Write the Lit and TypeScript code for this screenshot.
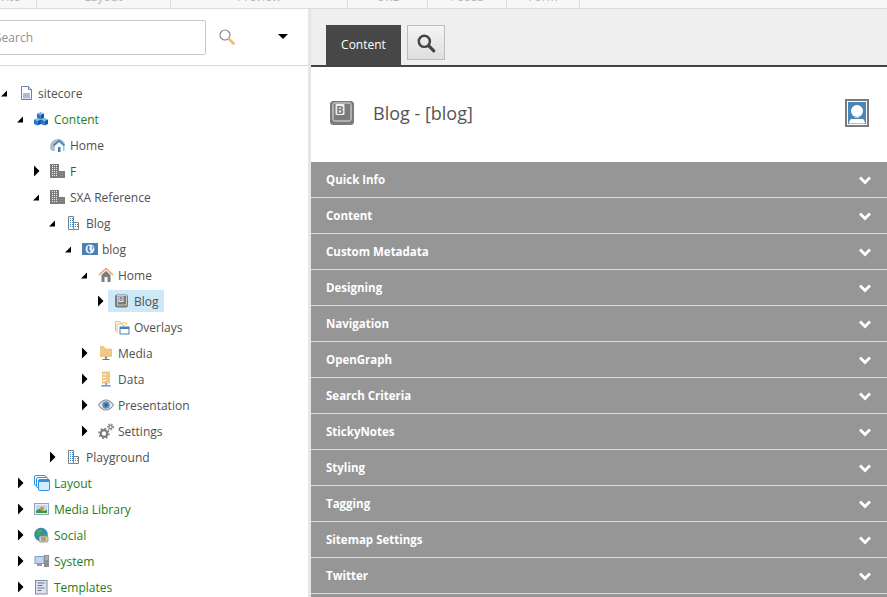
import { LitElement, html, css, svg } from "lit";
import { customElement } from "lit/decorators.js";

const cube = (x: number, y: number) => svg`
  <path d="M${x} ${y + 1.500}l3.500 -1.500 3.500 1.500 -3.500 1.500z" fill="#7dbcf2"/>
  <path d="M${x} ${y + 1.500}l3.500 1.500v4.500l-3.500 -1.500z" fill="#1f78d0"/>
  <path d="M${x + 7} ${y + 1.500}l-3.500 1.500v4.500l3.500 -1.500z" fill="#0f56a6"/>`;

const windows = (cells: number[][], fill: string) =>
  cells.map(([x, y]) => svg`<rect x="${x}" y="${y}" width="1" height="1" fill="${fill}"/>`);

const grid: number[][] = [];
for (const y of [2, 4, 6, 8, 10, 12]) for (const x of [2, 4, 6]) grid.push([x, y]);

const icons: Record<string, unknown> = {
  doc: svg`<path d="M3.500 1.500h7l3 3v10h-10z" fill="#fff" stroke="#6d81a6"/><path d="M10.500 1.500v3h3" fill="#dfe6f2" stroke="#6d81a6"/><rect x="5" y="8" width="7" height="5.500" fill="#a9bbdb"/>`,
  cubes: svg`${cube(3, 1)}${cube(0, 7)}${cube(7, 7)}`,
  homeBlue: svg`<path d="M0 10C0 5 4 2 8 2c3 0 5 1.500 6.500 3.500V14H3c-2 0-3-1.500-3-4z" fill="#b4bdc8"/><path d="M3.500 8.500L9 3.500l5.500 5" fill="none" stroke="#2a86d0" stroke-width="1.600"/><path d="M5 9l4-3.500L13 9v6H5z" fill="#fff"/><rect x="8" y="10" width="2.500" height="5" fill="#2a86d0"/>`,
  buildings: svg`<rect x="0" y="1" width="9" height="14" fill="#7d7d7d"/><rect x="9" y="8" width="6" height="7" fill="#7d7d7d"/>${windows(grid, "#eee")}${windows([[10, 10], [12, 10], [10, 12], [12, 12]], "#6aa5d8")}`,
  building: svg`<path d="M2.500 1.500h5v13h-5z" fill="#fff" stroke="#808080"/><path d="M7.500 7.500h5v7h-5z" fill="#fff" stroke="#808080"/>${windows([[4, 3], [6, 3], [4, 5], [6, 5], [4, 7], [6, 7], [4, 9], [6, 9], [4, 11], [6, 11], [9, 9], [11, 9], [9, 11], [11, 11]], "#3d86c6")}`,
  site: svg`<rect x="0" y="2" width="16" height="12" fill="#4a80b3"/><circle cx="8" cy="8" r="4.500" fill="#e8eff6"/><path d="M6 4.500l2 1.500-1 2 1.500 2-1 2-2-3zM10 5l1.500 1.500L10.500 9z" fill="#4a80b3"/>`,
  home: svg`<path d="M1 8l7-6.500L15 8" fill="none" stroke="#ee9f6d" stroke-width="1.500"/><path d="M3.500 8L8 3.800 12.500 8v7h-9z" fill="#7d7d7d"/><rect x="6.500" y="10" width="3" height="5" fill="#fff"/>`,
  key: svg`<rect x="1" y="1.500" width="13" height="13" rx="2" fill="#7b7b7b"/><rect x="3.500" y="2.500" width="9" height="9.500" fill="none" stroke="#ddd" stroke-width=".8"/><rect x="4.500" y="3.500" width="5" height="5.500" fill="#eee"/><text x="7" y="8.400" text-anchor="middle" font-family="Open Sans" font-weight="700" font-size="6" fill="#7b7b7b">B</text>`,
  overlays: svg`<path d="M1.500 12V2.500h4l1 1.500h6v2" fill="#fff" stroke="#eebc77"/><path d="M3 14V5h5l1 1.500h2" fill="#fff" stroke="#eebc77"/><rect x="6" y="8" width="9" height="7" fill="#fff" stroke="#4a80b3"/><rect x="6" y="8" width="9" height="2" fill="#4a80b3"/>`,
  media: svg`<path d="M2.500 1.500v10h11V4h-6.500L6 1.500z" fill="#f2c983" stroke="#eebc77" stroke-width=".8"/><path d="M8 11.500v2.500M4.500 14.500h7" stroke="#4a80b3" stroke-width="1.200"/><path d="M6.500 12.500h3L8 14z" fill="#4a80b3"/>`,
  data: svg`<rect x="4" y="0.500" width="8" height="12" fill="#f2c983"/><path d="M5 3.500h3M5 6.500h3M5 9.500h3" stroke="#fff" stroke-width="1.200"/><path d="M8 12v2M3.500 14.800h9" stroke="#4a80b3" stroke-width="1.200"/>`,
  eye: svg`<path d="M.5 8C3 4.500 5.500 3 8 3s5 1.500 7.500 5c-2.500 3.500-5 5-7.500 5S3 11.500.5 8z" fill="#e9edf2" stroke="#8d8d8d" stroke-width="1.100"/><circle cx="8" cy="8" r="3.800" fill="#5a8fc0"/><circle cx="8" cy="8" r="1.700" fill="#2e628f"/>`,
  gears: svg`<circle cx="6" cy="10.500" r="3.300" fill="none" stroke="#777" stroke-width="2.200"/><circle cx="6" cy="10.500" r="5" fill="none" stroke="#777" stroke-width="1.400" stroke-dasharray="1.800 2.100"/><circle cx="12.500" cy="4" r="1.700" fill="none" stroke="#888" stroke-width="1.400"/><circle cx="12.500" cy="4" r="3" fill="none" stroke="#888" stroke-width="1.100" stroke-dasharray="1.400 1.500"/>`,
  layout: svg`<rect x="0.500" y="0.500" width="11.500" height="10" rx="1.500" fill="#fff" stroke="#2c93e6"/><rect x="2.500" y="2.500" width="11.500" height="10" rx="1.500" fill="#fff" stroke="#2c93e6"/><rect x="4.500" y="4.500" width="11" height="11" rx="1.500" fill="#d6ecfc" stroke="#2c93e6"/><rect x="4.500" y="4.500" width="11" height="2.500" fill="#2c93e6"/>`,
  picture: svg`<rect x="0.500" y="2.500" width="14" height="11" fill="#e6edf6" stroke="#8fa7c6"/><rect x="2" y="4" width="11" height="8" fill="#bcd7ee"/><path d="M2 12V9.500l4-2 3 2.500 4-1v3z" fill="#3c9a3c"/><circle cx="8" cy="7.500" r="2" fill="#e88a2a"/>`,
  globe: svg`<circle cx="7" cy="7.500" r="6.800" fill="#2e8eb8"/><path d="M3 3.500l4-1.500 1.500 2-3 2.500-1 3-2-2zM10 7l4 1-2 4-2-2z" fill="#53a84a"/><rect x="5" y="9" width="9" height="6" rx="1.500" fill="#d8d2b4" stroke="#8a8468" stroke-width=".8"/><path d="M7 11h5M7 13h5" stroke="#77705a"/>`,
  system: svg`<rect x="0.500" y="3" width="10" height="8" fill="#7f9fc8"/><rect x="1.500" y="4" width="8" height="6" fill="#c4d5ea"/><rect x="3" y="11" width="5" height="2" fill="#8c9bb0"/><rect x="10" y="2" width="5" height="12" fill="#8a8f96"/><path d="M11 4h3M11 6h3" stroke="#c9ced4"/>`,
  template: svg`<rect x="1.500" y="1.500" width="11.500" height="13.500" fill="#dfe3ee" stroke="#7f8aa8"/><path d="M3.500 4h7M3.500 6.500h5M3.500 9h7M3.500 11.500h4" stroke="#6c7690" stroke-width="1.100"/>`,
};

type Node = { t: string; d: number; i: string; a?: "o" | "c"; g?: boolean; s?: boolean };

const tree: Node[] = [
  { t: "sitecore", d: 0, i: "doc", a: "o" },
  { t: "Content", d: 1, i: "cubes", a: "o", g: true },
  { t: "Home", d: 2, i: "homeBlue" },
  { t: "F", d: 2, i: "buildings", a: "c" },
  { t: "SXA Reference", d: 2, i: "buildings", a: "o" },
  { t: "Blog", d: 3, i: "building", a: "o" },
  { t: "blog", d: 4, i: "site", a: "o" },
  { t: "Home", d: 5, i: "home", a: "o" },
  { t: "Blog", d: 6, i: "key", a: "c", s: true },
  { t: "Overlays", d: 6, i: "overlays" },
  { t: "Media", d: 5, i: "media", a: "c" },
  { t: "Data", d: 5, i: "data", a: "c" },
  { t: "Presentation", d: 5, i: "eye", a: "c" },
  { t: "Settings", d: 5, i: "gears", a: "c" },
  { t: "Playground", d: 3, i: "building", a: "c" },
  { t: "Layout", d: 1, i: "layout", a: "c", g: true },
  { t: "Media Library", d: 1, i: "picture", a: "c", g: true },
  { t: "Social", d: 1, i: "globe", a: "c", g: true },
  { t: "System", d: 1, i: "system", a: "c", g: true },
  { t: "Templates", d: 1, i: "template", a: "c", g: true },
];

const topTabs = [
  { t: "Write", w: 63 },
  { t: "Layout", w: 134 },
  { t: "Preview", w: 177 },
  { t: "URL", w: 80 },
  { t: "Feeds", w: 79 },
  { t: "Form", w: 73 },
];

const sections = [
  "Quick Info", "Content", "Custom Metadata", "Designing", "Navigation", "OpenGraph",
  "Search Criteria", "StickyNotes", "Styling", "Tagging", "Sitemap Settings", "Twitter",
];

@customElement("app-root")
export class AppRoot extends LitElement {
  static styles = css`
    :host {
      display: block;
      width: 887px;
      height: 597px;
      overflow: hidden;
      background: #fff;
      font-family: "Open Sans", sans-serif;
      font-size: 12px;
      color: #505050;
    }
    .strip {
      display: flex;
      height: 8px;
      overflow: hidden;
      margin-left: -26px;
      background: #f7f7f7;
      border-bottom: 1px solid #dcdcdc;
    }
    .strip-tab {
      height: 8px;
      box-sizing: border-box;
      border-right: 1px solid #dcdcdc;
      text-align: center;
      font-size: 12px;
      line-height: 18px;
      color: #b5b5b5;
      flex: none;
    }
    .strip-tab span { display: block; margin-top: -12px; }
    .main { display: flex; height: 588px; }
    .left {
      width: 308px;
      flex: none;
      overflow: hidden;
    }
    .split { width: 3px; flex: none; background: #e6e6e6; }
    .search {
      display: flex;
      align-items: center;
      height: 56px;
      border-bottom: 1px solid #d9d9d9;
    }
    .input {
      flex: none;
      box-sizing: border-box;
      width: 236px;
      height: 35px;
      margin-left: -30px;
      padding-left: 24px;
      border: 1px solid #c9c9c9;
      border-radius: 2px;
      font-size: 12px;
      line-height: 33px;
      color: #8f8f8f;
    }
    .glass { flex: none; width: 16px; height: 16px; margin-left: 13px; margin-top: -1px; }
    .caret {
      flex: none;
      margin-left: 43px;
      margin-top: -2px;
      width: 0;
      height: 0;
      border-left: 5.500px solid transparent;
      border-right: 5.500px solid transparent;
      border-top: 5px solid #000;
    }
    .tree { padding-top: 14px; }
    .row {
      display: flex;
      align-items: center;
      height: 26px;
      white-space: nowrap;
    }
    .arrow { flex: none; width: 18px; height: 16px; }
    .item {
      display: flex;
      align-items: center;
      gap: 4px;
      height: 22px;
    }
    .item.sel {
      margin-left: -6px;
      padding: 0 5px 0 6px;
      background: #cde8f6;
    }
    .item svg { flex: none; width: 16px; height: 16px; }
    .green { color: #1c7d1c; }
    .right { flex: 1; display: flex; flex-direction: column; min-width: 0; }
    .tabs {
      flex: none;
      display: flex;
      align-items: flex-start;
      gap: 6px;
      box-sizing: border-box;
      height: 58px;
      padding: 16px 0 0 15px;
      background: #efefef;
      border-bottom: 2px solid #444;
    }
    .tab {
      width: 75px;
      height: 40px;
      background: #474747;
      color: #fff;
      text-align: center;
      line-height: 40px;
      font-size: 12px;
    }
    .sbtn {
      display: flex;
      align-items: center;
      justify-content: center;
      box-sizing: border-box;
      width: 38px;
      height: 35px;
      border: 1px solid #bcbcbc;
      background: linear-gradient(#f4f4f4, #dedede);
    }
    .sbtn svg { width: 20px; height: 20px; }
    .title {
      flex: none;
      display: flex;
      align-items: center;
      box-sizing: border-box;
      height: 95px;
      padding: 0 18px 4px 19px;
    }
    .title-icon { flex: none; width: 24px; height: 24px; }
    .title-text {
      margin-left: 19px;
      flex: 1;
      font-size: 18px;
      color: #555;
    }
    .avatar { flex: none; width: 24px; height: 28px; display: block; }
    .sec {
      flex: none;
      display: flex;
      align-items: center;
      justify-content: space-between;
      box-sizing: border-box;
      height: 36px;
      padding: 0 15px;
      background: #969696;
      border-bottom: 1px solid #dcdcdc;
      color: #fff;
      font-weight: 700;
      font-size: 11.500px;
    }
    .sec svg { width: 14px; height: 10px; display: block; }
    .rest { flex: 1; background: #969696; }
  `;

  private arrow(a?: "o" | "c") {
    return html`<svg class="arrow" viewBox="0 0 18 16">
      ${a === "o" ? svg`<path d="M1 11.500L7 5.500V11.500z" fill="#000"/>` : ""}
      ${a === "c" ? svg`<path d="M2 2.500L7.500 8 2 13.500z" fill="#000"/>` : ""}
    </svg>`;
  }

  render() {
    return html`
      <div class="strip">
        ${topTabs.map(
          (t) => html`<div class="strip-tab" style="width:${t.w}px"><span>${t.t}</span></div>`,
        )}
      </div>
      <div class="main">
        <div class="left">
          <div class="search">
            <div class="input">Search</div>
            <svg class="glass" viewBox="0 0 16 16">
              <circle cx="6" cy="6" r="5" fill="#fff" stroke="#8a8a8a" stroke-width="1.200"/>
              <path d="M10 10l4.500 4.500" stroke="#eebc77" stroke-width="2.600" stroke-linecap="round"/>
            </svg>
            <div class="caret"></div>
          </div>
          <div class="tree">
            ${tree.map(
              (n) => html`<div class="row" style="padding-left:${n.d * 16}px">
                ${this.arrow(n.a)}
                <div class="item ${n.s ? "sel" : ""} ${n.g ? "green" : ""}">
                  <svg viewBox="0 0 16 16">${icons[n.i]}</svg>
                  <span>${n.t}</span>
                </div>
              </div>`,
            )}
          </div>
        </div>
        <div class="split"></div>
        <div class="right">
          <div class="tabs">
            <div class="tab">Content</div>
            <div class="sbtn">
              <svg viewBox="0 0 18 18">
                <circle cx="7.500" cy="7.500" r="5" fill="none" stroke="#444" stroke-width="2.200"/>
                <path d="M11.500 11.500l4.500 4.500" stroke="#444" stroke-width="2.800" stroke-linecap="round"/>
              </svg>
            </div>
          </div>
          <div class="title">
            <svg class="title-icon" viewBox="0 0 24 24">
              <rect x="0" y="0" width="24" height="24" rx="3.500" fill="#7b7b7b"/>
              <rect x="3" y="2" width="18" height="18" rx="1.500" fill="none" stroke="#e6e6e6"/>
              <rect x="5.500" y="3" width="9" height="11" rx="1" fill="#f0f0f0"/>
              <text x="10" y="12.500" text-anchor="middle" font-family="Open Sans" font-weight="700" font-size="11" fill="#7b7b7b">B</text>
            </svg>
            <div class="title-text">Blog - [blog]</div>
            <svg class="avatar" viewBox="0 0 24 28">
              <rect x="1" y="1" width="22" height="26" fill="#4a86b8" stroke="#7a7a7a" stroke-width="2"/>
              <rect x="2.500" y="2.500" width="19" height="23" fill="none" stroke="#fff"/>
              <circle cx="12" cy="12" r="6" fill="#fff"/>
              <path d="M4 24.500c0-4 3-6 8-6s8 2 8 6z" fill="#fff"/>
              <path d="M5 19.500h14" stroke="#4a86b8"/>
            </svg>
          </div>
          ${sections.map(
            (s) => html`<div class="sec">
              <span>${s}</span>
              <svg viewBox="0 0 14 10"><path d="M2 2.500l5 5 5-5" fill="none" stroke="#fff" stroke-width="2.800"/></svg>
            </div>`,
          )}
          <div class="rest"></div>
        </div>
      </div>
    `;
  }
}
